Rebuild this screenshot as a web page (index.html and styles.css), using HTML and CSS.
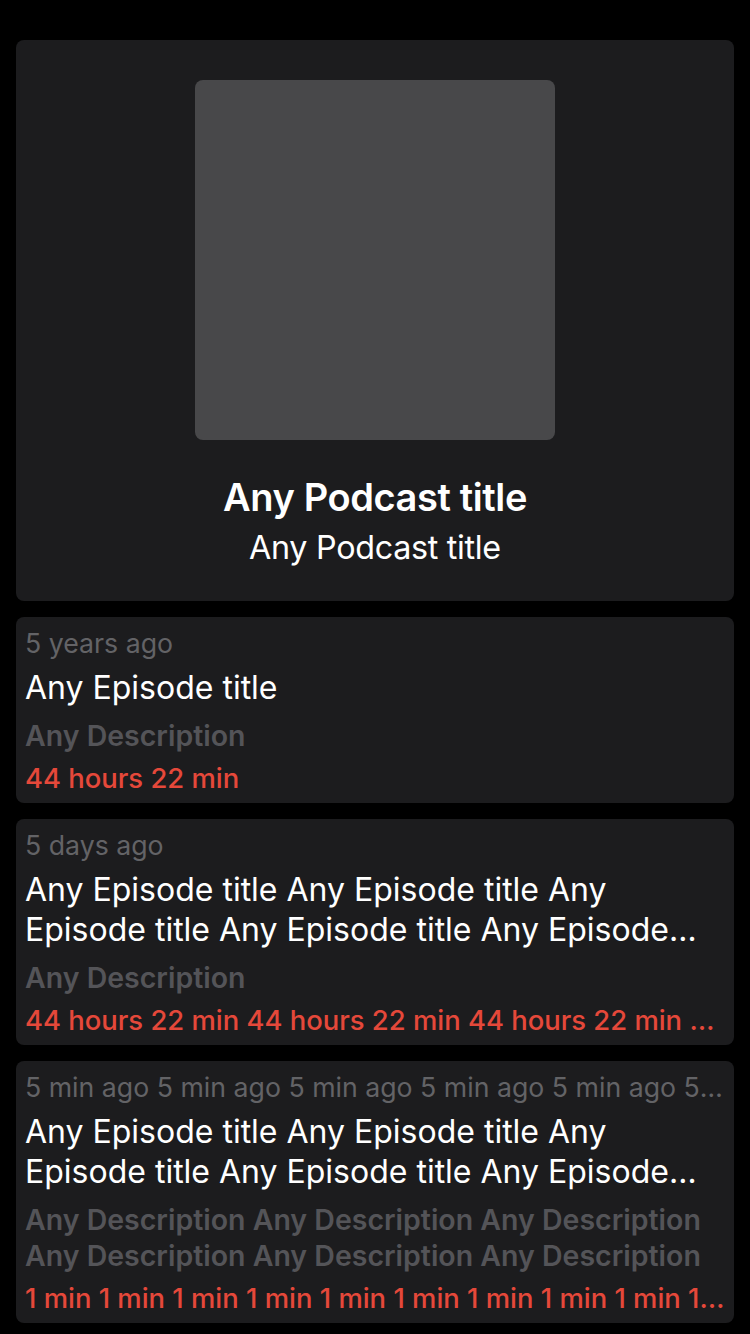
FILE: index.html
```html
<!DOCTYPE html>
<html lang="en">
<head>
<meta charset="utf-8">
<title>Podcast</title>
<link rel="stylesheet" href="styles.css">
</head>
<body>
<main class="page">
  <section class="header-card">
    <div class="artwork"></div>
    <h1 class="podcast-title">Any Podcast title</h1>
    <p class="podcast-subtitle">Any Podcast title</p>
  </section>

  <article class="episode">
    <p class="ep-date">5 years ago</p>
    <h2 class="ep-title">Any Episode title</h2>
    <p class="ep-desc">Any Description</p>
    <p class="ep-dur">44 hours 22 min</p>
  </article>

  <article class="episode">
    <p class="ep-date">5 days ago</p>
    <h2 class="ep-title">Any Episode title Any Episode title Any Episode title Any Episode title Any Episode title Any Episode title</h2>
    <p class="ep-desc">Any Description</p>
    <p class="ep-dur">44 hours 22 min 44 hours 22 min 44 hours 22 min 44 hours 22 min</p>
  </article>

  <article class="episode">
    <p class="ep-date">5 min ago 5 min ago 5 min ago 5 min ago 5 min ago 5 min ago 5 min ago</p>
    <h2 class="ep-title">Any Episode title Any Episode title Any Episode title Any Episode title Any Episode title Any Episode title</h2>
    <p class="ep-desc">Any Description Any Description Any Description Any Description Any Description Any Description</p>
    <p class="ep-dur">1 min 1 min 1 min 1 min 1 min 1 min 1 min 1 min 1 min 1 min 1 min 1 min 1 min</p>
  </article>
</main>
</body>
</html>
```

FILE: styles.css
```css
* {
  box-sizing: border-box;
}

html,
body {
  margin: 0;
  padding: 0;
  background: #000;
}

body {
  font-family: Inter, "Noto Sans", "Liberation Sans", sans-serif;
  color: #fff;
  width: 750px;
  min-height: 1334px;
}

.page {
  display: flex;
  flex-direction: column;
  gap: 16px;
  padding: 40px 16px 16px;
}

.header-card {
  background: #1c1c1e;
  border-radius: 8px;
  height: 561px;
  display: flex;
  flex-direction: column;
  align-items: center;
  padding-top: 40px;
}

.artwork {
  width: 360px;
  height: 360px;
  background: #48484a;
  border-radius: 8px;
  flex: none;
}

.podcast-title {
  margin: 36px 0 0;
  font-size: 38px;
  line-height: 42px;
  font-weight: 600;
  letter-spacing: -0.4px;
}

.podcast-subtitle {
  margin: 12px 0 0;
  font-size: 32.3px;
  line-height: 36px;
  font-weight: 400;
  letter-spacing: -0.3px;
}

.episode {
  background: #1c1c1e;
  border-radius: 8px;
  padding: 10px 9px 10px;
  display: flex;
  flex-direction: column;
  gap: 9px;
}

.episode p,
.episode h2 {
  margin: 0;
}

.ep-date {
  font-size: 26.7px;
  line-height: 32px;
  color: #636366;
  white-space: nowrap;
  overflow: hidden;
  text-overflow: ellipsis;
}

.ep-title {
  font-size: 32px;
  line-height: 40.5px;
  font-weight: 400;
  color: #fff;
  display: -webkit-box;
  -webkit-box-orient: vertical;
  -webkit-line-clamp: 2;
  overflow: hidden;
}

.ep-desc {
  font-size: 28.5px;
  line-height: 36px;
  font-weight: 600;
  color: #545458;
  display: -webkit-box;
  -webkit-box-orient: vertical;
  -webkit-line-clamp: 2;
  overflow: hidden;
}

.ep-dur {
  font-size: 27.4px;
  line-height: 30px;
  font-weight: 500;
  color: #e5483a;
  white-space: nowrap;
  overflow: hidden;
  text-overflow: ellipsis;
}
```
